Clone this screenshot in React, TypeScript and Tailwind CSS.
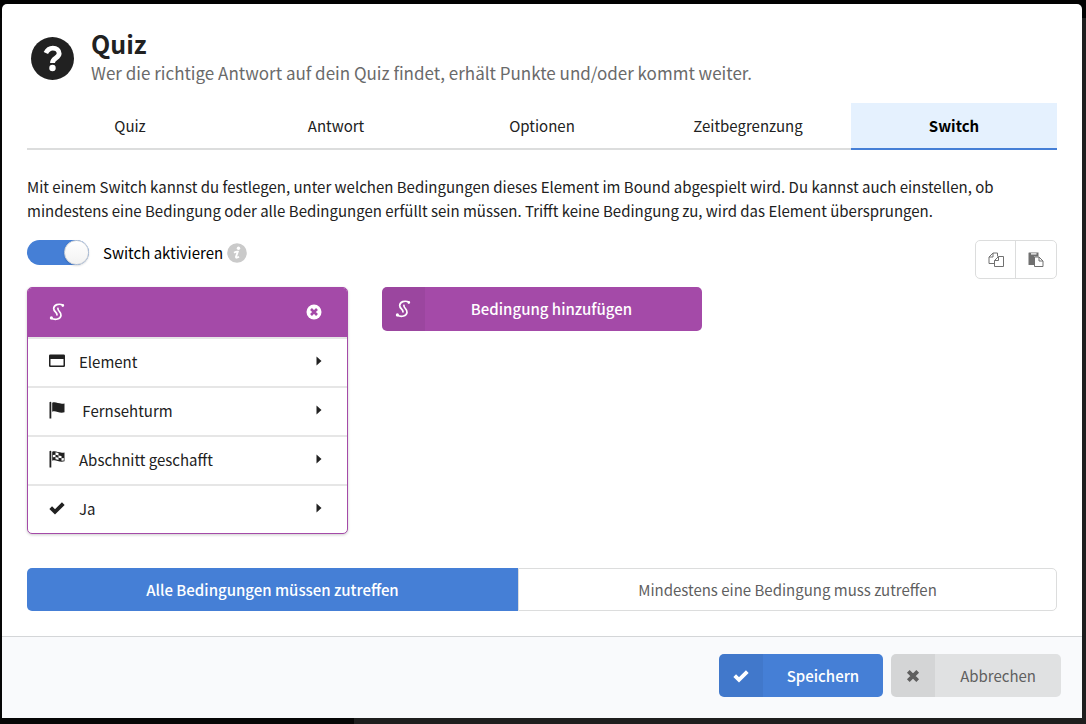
import { useState, type ReactNode } from "react";

const TABS = ["Quiz", "Antwort", "Optionen", "Zeitbegrenzung", "Switch"];

function SwitchIcon() {
  return (
    <svg viewBox="0 0 16 18" className="h-[18px] w-4" fill="none" stroke="currentColor" strokeLinecap="round" aria-hidden="true">
      <path d="M14 2C9.500 .2 5 1.800 4.700 5.300C4.500 8.700 8.200 9 8 12" strokeWidth="1.700" />
      <path d="M8.900 5.300C8.600 8.300 12.400 8.800 12 12.300C11.500 16.200 6.500 17.400 2.200 15.300" strokeWidth="1.700" />
      <circle cx="13.800" cy="2.600" r="1.300" fill="currentColor" stroke="none" />
      <circle cx="2.400" cy="14.900" r="1.600" fill="currentColor" stroke="none" />
    </svg>
  );
}

function WindowIcon() {
  return (
    <svg viewBox="0 0 16 18" className="h-[18px] w-4" fill="currentColor" aria-hidden="true">
      <path fillRule="evenodd" d="M1.300 2.500h13.400q1.300 0 1.300 1.300v9.900q0 1.300-1.300 1.300H1.300Q0 15 0 13.700V3.800Q0 2.500 1.300 2.500ZM1.500 7v6q0 .5.500.5h12q.5 0 .5-.5V7Z" />
    </svg>
  );
}

function FlagIcon() {
  return (
    <svg viewBox="0 0 16 18" className="h-[18px] w-4" fill="currentColor" aria-hidden="true">
      <path d="M.5 1.500q0-.7.9-.7t.9.700v16H.5ZM3.200 1.800C7 .2 9.500 3.600 15.500 2.400V11.300C10 12.800 7 9.200 3.200 10.700Z" />
    </svg>
  );
}

function CheckeredFlagIcon() {
  return (
    <svg viewBox="0 0 16 18" className="h-[18px] w-4" fill="currentColor" aria-hidden="true">
      <path fillRule="evenodd" d="M.5 1.500q0-.7.9-.7t.9.700v16H.5ZM3.200 1.800C7 .2 9.500 3.600 15.500 2.400V11.300C10 12.800 7 9.200 3.200 10.700ZM6.500 2.300V4.800L3.900 5V7.300L6.500 7.100V9.200Q8 9.300 9.500 10V7.700L6.500 7.100V4.800L9.500 5.500V7.700L12.500 8.300V10.700L14.800 10.600V8.100L12.500 8.300V5.900L9.500 5.500V3Z" />
    </svg>
  );
}

function CheckIcon() {
  return (
    <svg viewBox="0 0 16 18" className="h-[18px] w-4" fill="none" stroke="currentColor" strokeWidth="3.800" aria-hidden="true">
      <path d="M1.700 8.600L6 12.900L14.300 4.600" />
    </svg>
  );
}

function CrossIcon() {
  return (
    <svg viewBox="0 0 16 18" className="h-[18px] w-4" fill="none" stroke="currentColor" strokeWidth="3.800" aria-hidden="true">
      <path d="M3.300 4.300L12.700 13.700M12.700 4.300L3.300 13.700" />
    </svg>
  );
}

function CopyIcon() {
  return (
    <svg viewBox="0 0 16 16" className="size-4" fill="none" stroke="currentColor" strokeLinejoin="round" aria-hidden="true">
      <path d="M6.500 11.500H1V5L5 1H9.500V4.500M5 1V5H1M10.500 4.500H15.500V14.500H6.500V8.500ZM10.500 4.500V8.500H6.500" />
    </svg>
  );
}

function PasteIcon() {
  return (
    <svg viewBox="0 0 16 16" className="size-4" aria-hidden="true">
      <path fill="currentColor" fillRule="evenodd" d="M1 .5H10.500V4.500H6V13H1Q.5 13 .5 12.500V1Q.5.5 1 .5ZM3 1.300V2.400H8.500V1.300Z" />
      <path fill="none" stroke="currentColor" strokeLinejoin="round" d="M6.500 5H11L15 9V14.500H6.500ZM11 5V9H15" />
    </svg>
  );
}

function CaretIcon() {
  return (
    <svg viewBox="0 0 6 10" className="h-[10px] w-[6px]" fill="currentColor" aria-hidden="true">
      <path d="M.5 .5L5.500 5L.5 9.500Z" />
    </svg>
  );
}

const CONDITION_ROWS: { label: string; icon: ReactNode }[] = [
  { label: "Element", icon: <WindowIcon /> },
  { label: " Fernsehturm", icon: <FlagIcon /> },
  { label: "Abschnitt geschafft", icon: <CheckeredFlagIcon /> },
  { label: "Ja", icon: <CheckIcon /> },
];

function ConditionCard() {
  return (
    <section className="overflow-hidden rounded-[5px] border border-[#a44aa8] bg-white shadow-[0_1px_3px_rgba(0,0,0,0.2)]">
      <header className="flex h-[49px] items-center justify-between bg-[#a44aa8] pr-[25px] pb-[2px] pl-[21px] text-white">
        <SwitchIcon />
        <button type="button" aria-label="Bedingung entfernen">
          <svg viewBox="0 0 16 16" className="size-4" aria-hidden="true">
            <circle cx="8" cy="8" r="7.500" fill="currentColor" />
            <path d="M5 5L11 11M11 5L5 11" stroke="#a44aa8" strokeWidth="2.600" />
          </svg>
        </button>
      </header>
      {CONDITION_ROWS.map((row) => (
        <button
          key={row.label}
          type="button"
          className="flex h-[49px] w-full items-center border-t-2 border-[#e6e6e6] pr-[25px] pb-1 pl-[21px] text-left"
        >
          {row.icon}
          <span className="ml-[14px] flex-1 pt-[2px] whitespace-pre">{row.label}</span>
          <CaretIcon />
        </button>
      ))}
    </section>
  );
}

export default function App() {
  const [activeTab, setActiveTab] = useState("Switch");
  const [enabled, setEnabled] = useState(true);
  const [matchAll, setMatchAll] = useState(true);

  const selected = "bg-[#457fd6] font-medium text-white";
  const unselected = "border border-[#dcdddd] bg-white text-[#5f5f5f]";

  return (
    <div className="min-h-screen bg-[linear-gradient(#020202_18px,transparent_18px),linear-gradient(90deg,#060606_354px,#1e1e1e_354px)] pt-1 pr-1 pb-[6px] pl-[2px] font-['Noto_Sans_CJK_SC',sans-serif] text-[15px] leading-6 text-[#212121]">
      <main className="overflow-hidden rounded-t-[5px] bg-white">
        <div className="px-[25px] pt-[23px] pb-[25px]">
          <header className="flex items-end gap-[17px] pl-1">
            <svg viewBox="0 0 44 44" className="mb-[7px] size-[43px] shrink-0" aria-hidden="true">
              <circle cx="22" cy="22" r="22" fill="#212121" />
              <path d="M15.200 16.400C17 12.800 19 11.400 22.300 11.400C26 11.400 28.800 13.600 28.800 17C28.800 21.500 22 21.600 22 26.500" fill="none" stroke="#fff" strokeWidth="5" />
              <circle cx="22" cy="31.800" r="3.300" fill="#fff" />
            </svg>
            <div>
              <h1 className="text-[25px] leading-8 font-bold">Quiz</h1>
              <p className="text-[17px] leading-7 text-[#6a6a6a]">
                Wer die richtige Antwort auf dein Quiz findet, erhält Punkte und/oder kommt weiter.
              </p>
            </div>
          </header>

          <nav className="mt-4 grid grid-cols-5">
            {TABS.map((tab) => (
              <button
                key={tab}
                type="button"
                onClick={() => setActiveTab(tab)}
                className={
                  tab === activeTab
                    ? "h-[47px] border-b-2 border-[#457fd6] bg-[#e5f1fe] font-bold text-black"
                    : "h-[47px] border-b-2 border-[#dcdddd]"
                }
              >
                {tab}
              </button>
            ))}
          </nav>

          <p className="mt-[25px]">
            Mit einem Switch kannst du festlegen, unter welchen Bedingungen dieses Element im Bound abgespielt wird. Du
            kannst auch einstellen, ob mindestens eine Bedingung oder alle Bedingungen erfüllt sein müssen. Trifft keine
            Bedingung zu, wird das Element übersprungen.
          </p>

          <div className="mt-[17px] flex items-start justify-between">
            <div className="flex items-center">
              <input
                id="switch-enabled"
                type="checkbox"
                checked={enabled}
                onChange={(event) => setEnabled(event.target.checked)}
                className="flex h-[25px] w-[62px] appearance-none rounded-full bg-[#dcdddd] before:size-[25px] before:rounded-full before:border before:border-[#d0d3d6] before:bg-linear-to-b before:from-white before:to-[#f2f2f2] before:shadow-[0_1px_2px_rgba(0,0,0,0.15)] checked:justify-end checked:bg-[#457fd6]"
              />
              <label htmlFor="switch-enabled" className="ml-[14px] text-black">
                Switch aktivieren
              </label>
              <svg viewBox="0 0 20 20" className="ml-1 size-5 text-[#cacaca]" aria-hidden="true">
                <circle cx="10" cy="10" r="9.800" fill="currentColor" />
                <circle cx="11.500" cy="5.200" r="1.700" fill="#fff" />
                <path d="M7 9.800Q9.500 8.300 10.800 8.700L9 13.800Q8.800 15.600 12 13.700" fill="none" stroke="#fff" strokeWidth="1.900" />
              </svg>
            </div>
            <div className="flex h-[39px] w-[82px] rounded-[5px] border border-[#dcdddd] text-[#707070]">
              <button type="button" aria-label="Kopieren" className="flex w-10 items-center justify-center border-r border-[#dcdddd]">
                <CopyIcon />
              </button>
              <button type="button" aria-label="Einfügen" className="flex flex-1 items-center justify-center">
                <PasteIcon />
              </button>
            </div>
          </div>

          <div className="mt-2 grid grid-cols-3 items-start gap-[34px]">
            <ConditionCard />
            <button type="button" className="flex h-11 items-center overflow-hidden rounded-[5px] bg-[#a44aa8] font-medium text-white">
              <span className="flex h-full w-[43px] items-center justify-center bg-black/5">
                <SwitchIcon />
              </span>
              <span className="flex-1 pr-12 pl-6">Bedingung hinzufügen</span>
            </button>
          </div>

          <div className="mt-[34px] flex h-[43px]">
            <button
              type="button"
              onClick={() => setMatchAll(true)}
              className={`flex-auto rounded-l-[5px] ${matchAll ? selected : unselected}`}
            >
              Alle Bedingungen müssen zutreffen
            </button>
            <button
              type="button"
              onClick={() => setMatchAll(false)}
              className={`flex-auto rounded-r-[5px] ${matchAll ? unselected : selected}`}
            >
              Mindestens eine Bedingung muss zutreffen
            </button>
          </div>
        </div>

        <footer className="flex justify-end gap-2 border-t border-[#d4d6d8] bg-[#f9fafc] px-[21px] pt-[17px] pb-[21px]">
          <button type="button" className="flex h-[43px] items-center overflow-hidden rounded-[5px] bg-[#457fd6] font-medium text-white">
            <span className="flex h-full w-11 items-center justify-center bg-black/5">
              <CheckIcon />
            </span>
            <span className="px-6">Speichern</span>
          </button>
          <button type="button" className="flex h-[43px] items-center overflow-hidden rounded-[5px] bg-[#e0e1e2] text-[#5f5f5f]">
            <span className="flex h-full w-11 items-center justify-center bg-black/5">
              <CrossIcon />
            </span>
            <span className="px-[25px]">Abbrechen</span>
          </button>
        </footer>
      </main>
    </div>
  );
}
